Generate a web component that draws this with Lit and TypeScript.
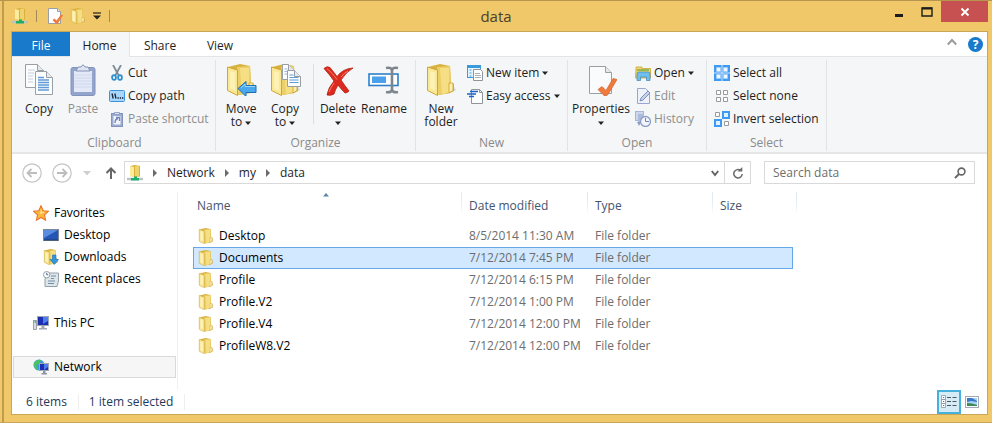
import { LitElement, html, css, svg, TemplateResult } from "lit";
import { customElement, property, state } from "lit/decorators.js";
import { classMap } from "lit/directives/class-map.js";

const folder = svg`
  <path d="M22 30l9-4-4-6-6 4z" fill="#a9a9a9" opacity=".4"/>
  <path d="M3 3l12-3 10 2 1 17 3 1v7l-4 2-11 2-7-3-4-3z" fill="#d8b23e"/>
  <path d="M12 3l13-1 1 19-2 8-11 2z" fill="#edcf68"/>
  <path d="M15 4h9v24l-7 2z" fill="#f5de84"/>
  <path d="M2.500 3l10 3v25.500l-10-5z" fill="#fae894" stroke="#cda53a" stroke-width="1"/>
  <path d="M5 7l5 1.500v18l-5-2z" fill="#fff6c8" opacity=".6"/>
  <path d="M24 19h4v7.500l-4 2.500z" fill="#fdf0ae" stroke="#c9a030" stroke-width=".8"/>`;

const sheet = (x: number, y: number, w: number, h: number) => svg`
  <path d="M${x} ${y}h${w - 6}l6 6v${h - 6}h${-w}z" fill="#fcfdff" stroke="#9a9fa6"/>
  <path d="M${x + w - 6} ${y}v6h6" fill="#e6e8eb" stroke="#9a9fa6"/>`;

const icons: Record<string, [string, TemplateResult | unknown]> = {
  folder: ["0 0 32 32", folder],
  copy: ["0 0 32 32", svg`${sheet(2.5, 0.5, 18, 23)}
    <path d="M5 6h7M5 9h6M5 12h5M5 15h5M5 18h5" stroke="#c3cedd"/>
    ${sheet(12.5, 7.5, 17, 23)}
    <path d="M15 13.500h6M15 16h11M15 18.500h11M15 21h11M15 23.500h11M15 26h11" stroke="#5f9bd6" stroke-width="1.400"/>`],
  paste: ["0 0 32 32", svg`
    <rect x="4" y="3.500" width="24" height="28" rx="2" fill="#93a5cd" stroke="#8193bd"/>
    <rect x="7" y="7" width="18" height="21" fill="#e3e9f6"/>
    <path d="M7 11h18M7 14h18M7 17h18M7 20h18M7 23h18" stroke="#cdd7ec"/>
    <path d="M11 3h3q2-4 4 0h3l2 4H9z" fill="#dfe4ee" stroke="#8193bd"/>`],
  cut: ["0 0 16 16", svg`
    <path d="M4 0l5.500 10M12 0L6.500 10" stroke="#7e8a97" stroke-width="1.800"/>
    <ellipse cx="5" cy="12.500" rx="1.900" ry="2.400" fill="none" stroke="#2d8fd0" stroke-width="1.800"/>
    <ellipse cx="11" cy="12.500" rx="1.900" ry="2.400" fill="none" stroke="#2d8fd0" stroke-width="1.800"/>`],
  path: ["0 0 16 16", svg`
    <rect x=".5" y="2.500" width="15" height="11" rx="1" fill="#a9d6fa" stroke="#3d92e0"/>
    <path d="M3 5.500l1.200 5M5.800 5.500l1.200 5" stroke="#10233c" stroke-width="1.300"/>
    <path d="M8.500 10h1.300M10.800 10h1.300M13 10h1.300" stroke="#10233c" stroke-width="1.300"/>`],
  shortcut: ["0 0 16 16", svg`
    <rect x="2.500" y="2.500" width="11" height="13" fill="#9cadcf" stroke="#8193bd"/>
    <rect x="4.500" y="5" width="7" height="8.500" fill="#f1f4fb"/>
    <path d="M5.500 1.500h5v2h-5z" fill="#dfe4ee" stroke="#8193bd" stroke-width=".8"/>
    <path d="M6 12q0-4 3-4.500M7 6.500h3.500V10" stroke="#6f86b8" stroke-width="1.300" fill="none"/>`],
  move: ["0 0 32 32", svg`${folder}
    <path d="M13 24.500l8-7v4h10v7H21v4z" fill="#4aa9ee" stroke="#1f6fb5"/>
    <path d="M16 24l4-4v2.500h10" stroke="#9bd4ff" fill="none"/>`],
  copyto: ["0 0 32 32", svg`${folder}
    ${sheet(13.5, 0.5, 12, 15)}
    <path d="M15.500 5h3M15.500 7.500h5M15.500 10h3" stroke="#9db8d8"/>
    ${sheet(18.5, 6.5, 13, 16)}
    <path d="M20.500 11h4M20.500 13.500h9M20.500 16h9M20.500 18.500h9" stroke="#5f9bd6"/>`],
  delete: ["0 0 32 32", svg`
    <path d="M2 4.500q3-3 6-1 4 5 7 9 6-8 16-8.500-7 4-12 12 4 6 8 11-2 2-4 2-4-4-7-8-3 5-4 9-3 2-7 1 1-7 7-14-4-6-10-12.500z" fill="#dc2b1e" stroke="#b81c12" stroke-width=".8"/>
    <path d="M5 4.500q6 5 10 11M19 13q3-4 7-6M7 28q2-5 5-9" stroke="#f4816f" fill="none"/>`],
  rename: ["0 0 32 32", svg`
    <rect x="1" y="10" width="29" height="11.500" fill="#fff" stroke="#2f7fc8" stroke-width="1.600"/>
    <rect x="4" y="12.500" width="14" height="6.500" fill="#4aa0ea"/>
    <path d="M18 4q5-1 6 2 1-3 6-2M18 28q5 1 6-2 1 3 6 2M24 5v22" stroke="#7f858c" stroke-width="2.600" fill="none"/>`],
  newitem: ["0 0 16 16", svg`
    <rect x=".5" y=".5" width="13" height="12" fill="#e8f5ff" stroke="#3a9bdc"/>
    <path d="M1 2h13" stroke="#3a9bdc" stroke-width="2"/>
    <path d="M2.500 5h2M2.500 8h2M2.500 11h2" stroke="#3a9bdc"/>
    <path d="M6.500 4.500h7l2 2v9h-9z" fill="#fff" stroke="#8d949c"/>
    <path d="M8 8.500h5M8 10.500h6M8 12.500h6" stroke="#a9b0b8"/>`],
  easy: ["0 0 16 16", svg`
    <path d="M4.500 1.500h8l3 3v11h-11z" fill="#fff" stroke="#8d949c"/>
    <path d="M12.500 1.500v3h3" fill="none" stroke="#8d949c"/>
    <path d="M3 3.500h8M0 6h9M2 8.500h5" stroke="#1d63c4" stroke-width="1.300"/>`],
  properties: ["0 0 32 32", svg`
    <path d="M4.500 2.500h16l6 6v21h-22z" fill="#fafbfc" stroke="#9a9fa6"/>
    <path d="M20.500 2.500v6h6" fill="#e6e8eb" stroke="#9a9fa6"/>
    <path d="M13 25.500l4-3 4 4 7-12 4 1-9 15q-3 3-5 0z" fill="#ee7a3e" stroke="#d2602a" stroke-width=".7"/>`],
  open: ["0 0 16 16", svg`
    <path d="M1 3.500V2h6v1.500h8.500V13H.5z" fill="#f3d567" stroke="#caa43a" stroke-width=".8"/>
    <path d="M2 5h12" stroke="#5aa84a" stroke-width="1.200"/>
    <path d="M2 15.500V9q0-2 2-2h9q2 0 2 2v6.500h-3.500V12h-6v3.500z" fill="#6fc0f0" stroke="#3787c0" stroke-width=".7"/>`],
  edit: ["0 0 16 16", svg`
    <path d="M2.500 .5h8l4 4v11h-12z" fill="#eef2fa" stroke="#98a8cc"/>
    <path d="M5 13l1-3 7-7 2 2-7 7z" fill="#c6d2ea" stroke="#7d90bd"/>`],
  history: ["0 0 16 16", svg`
    <rect x=".5" y=".5" width="8" height="9" fill="#ccd6ec" stroke="#a9b7d6"/>
    <rect x="3" y="3" width="6" height="8" fill="#aebcdb"/>
    <circle cx="10.500" cy="10.500" r="5" fill="#f1f4fb" stroke="#8d9ec6" stroke-width="1.300"/>
    <path d="M10.500 7v3.500H14" stroke="#7286b6" fill="none"/>
    <path d="M2 11h4l-2 4z" fill="#8d9ec6"/>`],
  all: ["0 0 16 16", svg`
    <path d="M0 0h16v16H0z" fill="#3c9bf4"/>
    <path d="M2.500 2.500h4v4h-4zM9.500 2.500h4v4h-4zM2.500 9.500h4v4h-4zM9.500 9.500h4v4h-4z" fill="#f0f8ff" stroke="#a9cdf0" stroke-width=".8"/>
    <path d="M7.500 0h1v16h-1zM0 7.500h16v1H0z" fill="#cfe6ff"/>`],
  none: ["0 0 16 16", svg`
    <path d="M2.500 2.500h4v4h-4zM9.500 2.500h4v4h-4zM2.500 9.500h4v4h-4zM9.500 9.500h4v4h-4z" fill="#fff" stroke="#9a9a9a"/>`],
  invert: ["0 0 16 16", svg`
    <path d="M1.500 1.500h4v4h-4zM10.500 10.500h4v4h-4z" fill="#fff" stroke="#9a9a9a"/>
    <path d="M9 1h6v6H9zM1 9h6v6H1z" fill="#e3f1ff" stroke="#3c9bf4" stroke-width="2"/>`],
  netfolder: ["0 0 16 16", svg`
    <path d="M0 14h16" stroke="#b9c2c4" stroke-width="2.400"/>
    <path d="M3 1l5-1 5 1v10.500l-5 .5-5-1z" fill="#d9b23c"/>
    <path d="M3 1l4 1v10l-4-1z" fill="#fbeb9e"/>
    <path d="M8 1h4v10.500H8z" fill="#efd36c"/>
    <path d="M4 13h3v-1.500h3V13h2v2.500H4z" fill="#1fae6b"/>`],
  qprops: ["0 0 16 16", svg`
    <path d="M1.500.5h9l3 3v12h-12z" fill="#fff" stroke="#9a9fa6"/>
    <path d="M10.500.5v3h3" fill="#e6e8eb" stroke="#9a9fa6"/>
    <path d="M5.500 12l2-1.500 2 2L14 6.500l2 .8-5 8q-1.500 1-2.500 0z" fill="#ee7a3e"/>`],
  star: ["0 0 16 16", svg`
    <path d="M8 .8l2.200 4.900 5.200.6-3.900 3.600 1.100 5.300L8 12.500l-4.600 2.700 1.100-5.300L.6 6.300l5.200-.6z" fill="#fdb83c" stroke="#e8752b" stroke-width="1.100"/>
    <path d="M8 4l1.200 3 2.800.3-5 2z" fill="#ffe694"/>`],
  desktop: ["0 0 16 16", svg`
    <rect x=".5" y="2.500" width="15" height="11" fill="#2457b5" stroke="#7b8794"/>
    <path d="M1 3h14L1 11z" fill="#5a8de0"/>
    <path d="M1 13h14" stroke="#243a66"/>`],
  downloads: ["0 0 16 16", svg`
    <g transform="scale(.5)">${folder}</g>
    <path d="M9.500 6h3.500v4.500h2.500L11.200 15.500 7 10.500h2.500z" fill="#2f96e6" stroke="#1f6fb5" stroke-width=".6"/>`],
  recent: ["0 0 16 16", svg`
    <path d="M4 2h11.500v8L14 15.500H2V8z" fill="#dfe6ea" stroke="#93a0a8"/>
    <path d="M8 5h5M8 7.500h3M5 10h7M5 12.500h6" stroke="#6c8ea8"/>
    <circle cx="3.700" cy="3.700" r="3.200" fill="#fff" stroke="#93a0a8"/>
    <path d="M3.700 1.800v2h1.600" stroke="#4a6a88" fill="none"/>`],
  pc: ["0 0 16 16", svg`
    <rect x=".5" y="5.500" width="3" height="9" fill="#d8dce0" stroke="#8a9096" stroke-width=".8"/>
    <path d="M1.500 7h1.500" stroke="#35b54a" stroke-width="1.500"/>
    <rect x="4.500" y="1.500" width="11" height="9" fill="#1b2fb0" stroke="#a0a8b4"/>
    <path d="M10 2h5v4l-5 3z" fill="#4f7cf0"/>
    <path d="M8.500 11h3v2h2.500v1.500H6V13h2.500z" fill="#a0a8b4"/>`],
  network: ["0 0 16 16", svg`
    <circle cx="6" cy="6" r="5.500" fill="#3d9be4"/>
    <path d="M1 4q3-4 7-3l-2 4-3 1 2 3-1 2Q0 8 1 4z" fill="#4cc45c"/>
    <rect x="6.500" y="4.500" width="9" height="7" fill="#1b2fb0" stroke="#a0a8b4"/>
    <path d="M11 5h4v3l-4 3z" fill="#4f7cf0"/>
    <path d="M10 12h2.500v2h1.500v1.500H8.500V14H10z" fill="#8d95a2"/>`],
  back: ["0 0 20 20", svg`
    <circle cx="10" cy="10" r="9.200" fill="#fff" stroke="#c4c4c4" stroke-width="1.200"/>
    <path d="M15 10H6M9.500 6L5.500 10l4 4" stroke="#bdbdbd" stroke-width="1.800" fill="none"/>`],
  forward: ["0 0 20 20", svg`
    <circle cx="10" cy="10" r="9.200" fill="#fff" stroke="#c4c4c4" stroke-width="1.200"/>
    <path d="M5 10h9M10.500 6l4 4-4 4" stroke="#bdbdbd" stroke-width="1.800" fill="none"/>`],
  recentdrop: ["0 0 8 8", svg`<path d="M0 2h8L4 6.500z" fill="#cfcfcf"/>`],
  up: ["0 0 12 12", svg`<path d="M6 12V1.500M1.500 6L6 1.500 10.500 6" stroke="#666" stroke-width="2" fill="none"/>`],
  crumb: ["0 0 8 8", svg`<path d="M2 0l4 4-4 4z" fill="#6b6b6b"/>`],
  chev: ["0 0 8 8", svg`<path d="M.8 2L4 6l3.200-4" stroke="#606060" stroke-width="1.900" fill="none"/>`],
  refresh: ["0 0 12 12", svg`
    <path d="M8.500 3.300A4.200 4.200 0 1 0 10.200 7" stroke="#6a6a6a" stroke-width="1.500" fill="none"/>
    <path d="M5.500 4.500h4.800V0z" fill="#6a6a6a"/>`],
  search: ["0 0 12 12", svg`
    <circle cx="7.500" cy="4.500" r="3.400" stroke="#666" stroke-width="1.600" fill="none"/>
    <path d="M5 7L1 11" stroke="#666" stroke-width="2"/>`],
  minimize: ["0 0 12 12", svg`<path d="M2 9.500h8" stroke="#1c1c1c" stroke-width="3"/>`],
  maximize: ["0 0 12 12", svg`<path d="M1 2h10v8H1z" stroke="#1c1c1c" stroke-width="1.400" fill="none"/><path d="M1 2.500h10" stroke="#1c1c1c" stroke-width="2"/>`],
  close: ["0 0 12 12", svg`<path d="M2.500 2.500l7 7M9.500 2.500l-7 7" stroke="#fff" stroke-width="1.900"/>`],
  collapse: ["0 0 12 12", svg`<path d="M1.800 8.500L6 4l4.200 4.500" stroke="#9b9b9b" stroke-width="2" fill="none"/>`],
  qmenu: ["0 0 8 8", svg`<path d="M0 1h8" stroke="#222" stroke-width="1.200"/><path d="M0 3.500h8L4 7.500z" fill="#222"/>`],
  drop: ["0 0 6 6", svg`<path d="M0 1.500h6L3 5z" fill="#222"/>`],
  sort: ["0 0 6 6", svg`<path d="M0 4.500h6L3 1z" fill="#5b83a8"/>`],
  details: ["0 0 16 16", svg`
    <path d="M.5 1.500h4v4h-4zM.5 5.500h4v4h-4zM.5 9.500h4v4h-4z" fill="#fff" stroke="#8b97a5" stroke-width=".8"/>
    <path d="M2 3.500h1.200M2 11.500h1.200" stroke="#2d7dd2" stroke-width="1.200"/><path d="M2 7.500h1.200" stroke="#d33" stroke-width="1.200"/>
    <path d="M6 3.500h4M11.500 3.500h4M6 7.500h4M11.500 7.500h4M6 11.500h4M11.500 11.500h4" stroke="#4d5661" stroke-width="1.100"/>`],
  thumbs: ["0 0 16 16", svg`
    <rect x="1.500" y="2.500" width="13" height="11" fill="#fff" stroke="#a2a9b3"/>
    <rect x="3" y="4" width="10" height="8" fill="#a8d2f4"/>
    <path d="M3 4h5l5 3v1L7 7 3 8z" fill="#3978c8"/>
    <path d="M3 9q5 0 10 2v1H3z" fill="#3b8a55"/>`],
};

@customElement("ui-icon")
export class UiIcon extends LitElement {
  @property() name = "folder";
  @property({ type: Number }) size = 16;

  static styles = css`
    :host { display: inline-flex; flex: none; }
    svg { display: block; }
  `;

  render() {
    const [box, shape] = icons[this.name];
    return html`<svg width=${this.size} height=${this.size} viewBox=${box} aria-hidden="true">${shape}</svg>`;
  }
}

interface Entry { name: string; modified: string }

@customElement("app-root")
export class AppRoot extends LitElement {
  @state() private selected = "Documents";

  private entries: Entry[] = [
    { name: "Desktop", modified: "8/5/2014 11:30 AM" },
    { name: "Documents", modified: "7/12/2014 7:45 PM" },
    { name: "Profile", modified: "7/12/2014 6:15 PM" },
    { name: "Profile.V2", modified: "7/12/2014 1:00 PM" },
    { name: "Profile.V4", modified: "7/12/2014 12:00 PM" },
    { name: "ProfileW8.V2", modified: "7/12/2014 12:00 PM" },
  ];

  static styles = css`
    :host {
      display: block;
      font: 12px/16px "Open Sans", "Noto Sans", sans-serif;
      color: #1e1e1e;
    }
    * { box-sizing: border-box; }
    button {
      font: inherit;
      color: inherit;
      background: none;
      border: 0;
      padding: 0;
      margin: 0;
    }
    a { color: inherit; text-decoration: none; }
    .frame {
      min-height: 100vh;
      display: flex;
      flex-direction: column;
      background: #f0c869;
      border-top: 1px solid #b6954c;
      border-bottom: 1px solid #c9a658;
      padding: 0 4px 0 2px;
    }
    .edge {
      flex: 1;
      display: flex;
      flex-direction: column;
      border-left: 2px solid #c09c50;
    }
    .titlebar {
      display: grid;
      grid-template-columns: 1fr auto 1fr;
      height: 30px;
      align-items: center;
    }
    .quick { display: flex; align-items: center; gap: 7px; padding-left: 8px; }
    .quick .bar { width: 1px; height: 12px; margin: 0 3px 0 1px; background: #a08a58; }
    .quick button { display: flex; }
    .title { margin: 0; font-size: 15px; line-height: 20px; font-weight: 400; color: #4a3f28; }
    .controls { display: flex; justify-content: flex-end; align-self: start; }
    .controls button { width: 28px; height: 21px; display: flex; align-items: center; justify-content: center; }
    .controls .close { width: 47px; background: #c75050; }
    .window {
      flex: 1;
      display: flex;
      flex-direction: column;
      margin: 0 0 7px 7px;
      background: #fff;
      border: 1px solid #c9a658;
    }
    .tabs { display: flex; height: 25px; border-bottom: 1px solid #e3e4e6; }
    .tabs button { width: 60px; padding-top: 3px; }
    .tabs .file { width: 58px; background: #1979ca; color: #fff; }
    .tabs .active {
      height: 25px;
      background: #f5f6f7;
      border-right: 1px solid #e3e4e6;
    }
    .tabs .help { margin-left: auto; display: flex; align-items: center; gap: 10px; padding-right: 4px; }
    .tabs .help button { width: auto; padding: 0; }
    .tabs .help .q {
      width: 15px; height: 15px; border-radius: 50%;
      background: #1979ca; color: #fff; font-weight: 700; line-height: 15px;
    }
    .ribbon {
      display: flex;
      height: 97px;
      background: #f5f6f7;
      border-bottom: 2px solid #e6e6e6;
      padding: 3px 0 1px;
    }
    .group {
      display: flex;
      flex-direction: column;
      justify-content: space-between;
      border-right: 1px solid #e2e3e4;
    }
    .group h2 { margin: 0; font-size: 12px; line-height: 16px; font-weight: 400; color: #8a8a8a; text-align: center; }
    .tools { display: flex; padding: 4px 0 0 3px; }
    .clipboard { width: 204px; padding-left: 2px; }
    .organize { width: 200px; }
    .new { width: 152px; }
    .open { width: 139px; }
    .select { width: 120px; }
    .big {
      width: 44px;
      display: flex;
      flex-direction: column;
      align-items: center;
      line-height: 13px;
      white-space: nowrap;
      gap: 6px;
    }
    .big.mid { width: 48px; }
    .big.wide { width: 60px; }
    .off { color: #8e8e8e; }
    .rule { width: 1px; height: 60px; margin: 0 2px 0 6px; background: #dcdee0; }
    .stack { display: flex; flex-direction: column; gap: 7px; padding: 1px 0 0 4px; }
    .small { display: flex; align-items: center; gap: 3px; white-space: nowrap; }
    .address { display: flex; align-items: center; height: 37px; padding: 0 12px 0 10px; }
    .nav { display: flex; align-items: center; width: 102px; }
    .nav button { display: flex; }
    .nav .fwd { margin: 0 11px 0 10px; }
    .nav .up { margin-left: 14px; }
    .field { display: flex; align-items: center; height: 23px; border: 1px solid #d9d9d9; background: #fff; }
    .path { flex: 1; padding-left: 2px; }
    .crumbs { flex: 1; display: flex; align-items: center; gap: 8px; }
    .path button { display: flex; justify-content: center; align-items: center; height: 21px; width: 18px; }
    .path .refresh { width: 26px; border-left: 1px solid #d9d9d9; }
    .searchbox { width: 211px; margin-left: 13px; padding: 0 8px; }
    .searchbox input {
      flex: 1; min-width: 0; border: 0; outline: 0; padding: 0; background: none;
      font: inherit; color: #6d6d6d;
    }
    .searchbox input::placeholder { color: #6d6d6d; opacity: 1; }
    .body { flex: 1; display: flex; padding-top: 1px; }
    .side { width: 166px; padding: 10px 1px 0; border-right: 1px solid #f0f0f0; }
    .side ul { list-style: none; margin: 0; padding: 0; }
    .side ul + ul { margin-top: 22px; }
    .side a {
      display: flex; align-items: center; gap: 5px; height: 22px;
      padding-left: 19px; border: 1px solid transparent; color: #000;
    }
    .side .child a { padding-left: 29px; }
    .side .current a { background: #f6f6f6; border-color: #dadada; }
    .files { flex: 1; padding-left: 15px; }
    table { border-collapse: separate; border-spacing: 0; table-layout: fixed; width: 600px; }
    .c-name { width: 269px; }
    .c-date { width: 126px; }
    .c-type { width: 125px; }
    .c-size { width: 80px; }
    th {
      position: relative;
      height: 33px;
      padding: 0 0 6px 7px;
      font-weight: 400;
      text-align: left;
      color: #44546f;
    }
    th:first-child { padding-left: 4px; }
    th::after {
      content: "";
      position: absolute;
      right: 0;
      top: 0;
      width: 1px;
      height: 22px;
      background: linear-gradient(#dfe8f3, #e8eef6 60%, #fff);
    }
    th:last-child::after { right: -4px; }
    .sort { position: absolute; top: 0; left: 130px; display: flex; }
    td { height: 22px; padding: 0 0 0 7px; color: #6d6d6d; }
    td:first-child { padding-left: 5px; color: #000; }
    .cell { display: flex; align-items: center; gap: 5px; }
    tr.selected td { background: #d1e8ff; border: solid #66a7e8; border-width: 1px 0; }
    tr.selected td:first-child { border-left-width: 1px; padding-left: 4px; }
    tr.selected td:last-child { border-right-width: 1px; }
    .status { display: flex; align-items: center; height: 24px; padding-left: 14px; color: #1e395b; }
    .status .item { padding-right: 11px; margin-right: 10px; border-right: 1px solid #efefef; }
    .views { margin-left: auto; display: flex; align-items: center; gap: 3px; padding-right: 7px; }
    .views button { display: flex; align-items: center; justify-content: center; width: 16px; height: 24px; }
    .views .on { width: 24px; background: #d5ecf7; border: 2px solid #46b1dd; }
  `;

  private small(icon: string, label: string, off = false, drop = false) {
    return html`<button class=${classMap({ small: true, off })} ?disabled=${off}>
      <ui-icon name=${icon}></ui-icon><span>${label}</span>${drop ? html`<ui-icon name="drop" size="6"></ui-icon>` : ""}
    </button>`;
  }

  private big(icon: string, top: string, bottom: unknown = "", extra = {}) {
    return html`<button class=${classMap({ big: true, ...extra })}>
      <ui-icon name=${icon} size="32"></ui-icon><span>${top}<br />${bottom}</span>
    </button>`;
  }

  private link(icon: string, label: string, cls = "") {
    return html`<li class=${cls}><a href="#"><ui-icon name=${icon}></ui-icon>${label}</a></li>`;
  }

  render() {
    const arrow = html`<ui-icon name="drop" size="6"></ui-icon>`;
    return html`
      <div class="frame"><div class="edge">
        <header class="titlebar">
          <div class="quick">
            <ui-icon name="netfolder"></ui-icon><span class="bar"></span>
            <button aria-label="Properties"><ui-icon name="qprops"></ui-icon></button>
            <button aria-label="New folder"><ui-icon name="folder"></ui-icon></button>
            <button aria-label="Customize toolbar"><ui-icon name="qmenu" size="8"></ui-icon></button>
            <span class="bar"></span>
          </div>
          <h1 class="title">data</h1>
          <div class="controls">
            <button aria-label="Minimize"><ui-icon name="minimize" size="12"></ui-icon></button>
            <button aria-label="Maximize"><ui-icon name="maximize" size="12"></ui-icon></button>
            <button class="close" aria-label="Close"><ui-icon name="close" size="12"></ui-icon></button>
          </div>
        </header>
        <main class="window">
          <nav class="tabs">
            <button class="file">File</button>
            <button class="active">Home</button>
            <button>Share</button>
            <button>View</button>
            <div class="help">
              <button aria-label="Collapse ribbon"><ui-icon name="collapse" size="12"></ui-icon></button>
              <button class="q" aria-label="Help">?</button>
            </div>
          </nav>
          <div class="ribbon">
            <section class="group clipboard">
              <div class="tools">
                ${this.big("copy", "Copy")}
                ${this.big("paste", "Paste", "", { off: true })}
                <div class="stack">
                  ${this.small("cut", "Cut")}
                  ${this.small("path", "Copy path")}
                  ${this.small("shortcut", "Paste shortcut", true)}
                </div>
              </div>
              <h2>Clipboard</h2>
            </section>
            <section class="group organize">
              <div class="tools">
                ${this.big("move", "Move", html`to ${arrow}`)}
                ${this.big("copyto", "Copy", html`to ${arrow}`)}
                <span class="rule"></span>
                ${this.big("delete", "Delete", arrow)}
                ${this.big("rename", "Rename", "", { mid: true })}
              </div>
              <h2>Organize</h2>
            </section>
            <section class="group new">
              <div class="tools">
                ${this.big("folder", "New", "folder")}
                <div class="stack">
                  ${this.small("newitem", "New item", false, true)}
                  ${this.small("easy", "Easy access", false, true)}
                </div>
              </div>
              <h2>New</h2>
            </section>
            <section class="group open">
              <div class="tools">
                ${this.big("properties", "Properties", arrow, { wide: true })}
                <div class="stack">
                  ${this.small("open", "Open", false, true)}
                  ${this.small("edit", "Edit", true)}
                  ${this.small("history", "History", true)}
                </div>
              </div>
              <h2>Open</h2>
            </section>
            <section class="group select">
              <div class="tools">
                <div class="stack">
                  ${this.small("all", "Select all")}
                  ${this.small("none", "Select none")}
                  ${this.small("invert", "Invert selection")}
                </div>
              </div>
              <h2>Select</h2>
            </section>
          </div>
          <div class="address">
            <div class="nav">
              <button aria-label="Back"><ui-icon name="back" size="20"></ui-icon></button>
              <button class="fwd" aria-label="Forward"><ui-icon name="forward" size="20"></ui-icon></button>
              <button aria-label="Recent locations"><ui-icon name="recentdrop" size="8"></ui-icon></button>
              <button class="up" aria-label="Up"><ui-icon name="up" size="12"></ui-icon></button>
            </div>
            <div class="field path">
              <div class="crumbs">
                <ui-icon name="netfolder"></ui-icon><ui-icon name="crumb" size="8"></ui-icon>
                <a href="#">Network</a><ui-icon name="crumb" size="8"></ui-icon>
                <a href="#">my</a><ui-icon name="crumb" size="8"></ui-icon>
                <a href="#">data</a>
              </div>
              <button aria-label="Previous locations"><ui-icon name="chev" size="8"></ui-icon></button>
              <button class="refresh" aria-label="Refresh"><ui-icon name="refresh" size="12"></ui-icon></button>
            </div>
            <label class="field searchbox">
              <input type="text" placeholder="Search data" aria-label="Search data" />
              <ui-icon name="search" size="12"></ui-icon>
            </label>
          </div>
          <div class="body">
            <aside class="side">
              <ul>
                ${this.link("star", "Favorites")}
                ${this.link("desktop", "Desktop", "child")}
                ${this.link("downloads", "Downloads", "child")}
                ${this.link("recent", "Recent places", "child")}
              </ul>
              <ul>${this.link("pc", "This PC")}</ul>
              <ul>${this.link("network", "Network", "current")}</ul>
            </aside>
            <div class="files">
              <table>
                <colgroup><col class="c-name" /><col class="c-date" /><col class="c-type" /><col class="c-size" /></colgroup>
                <thead>
                  <tr>
                    <th>Name<span class="sort"><ui-icon name="sort" size="6"></ui-icon></span></th>
                    <th>Date modified</th><th>Type</th><th>Size</th>
                  </tr>
                </thead>
                <tbody>
                  ${this.entries.map((e) => html`
                    <tr class=${classMap({ selected: e.name === this.selected })} @click=${() => (this.selected = e.name)}>
                      <td><div class="cell"><ui-icon name="folder"></ui-icon>${e.name}</div></td>
                      <td>${e.modified}</td><td>File folder</td><td></td>
                    </tr>`)}
                </tbody>
              </table>
            </div>
          </div>
          <footer class="status">
            <span class="item">6 items</span><span class="item">1 item selected</span>
            <div class="views">
              <button class="on" aria-label="Details view"><ui-icon name="details"></ui-icon></button>
              <button aria-label="Thumbnail view"><ui-icon name="thumbs"></ui-icon></button>
            </div>
          </footer>
        </main>
      </div></div>
    `;
  }
}
